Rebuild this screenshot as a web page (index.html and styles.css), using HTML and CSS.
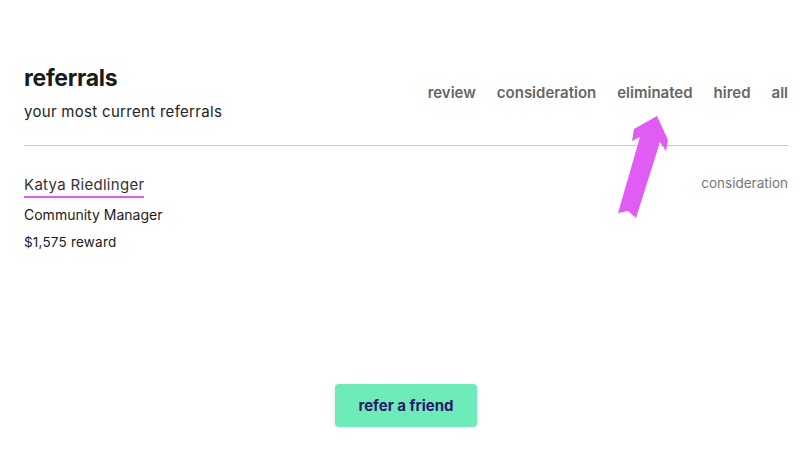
FILE: index.html
```html
<!DOCTYPE html>
<html lang="en">

<head>
    <meta charset="UTF-8">
    <meta name="viewport" content="width=device-width, initial-scale=1.0">
    <title>Referrals</title>
    <link rel="stylesheet" href="styles.css">
</head>

<body>
    <div class="page">
        <div class="header">
            <div class="heading">
                <h1>referrals</h1>
                <p>your most current referrals</p>
            </div>
            <nav class="tabs">
                <a href="#">review</a>
                <a href="#">consideration</a>
                <a href="#">eliminated</a>
                <a href="#">hired</a>
                <a href="#">all</a>
            </nav>
        </div>

        <div class="referral">
            <div class="details">
                <a href="#" class="name">Katya Riedlinger</a>
                <div class="role">Community Manager</div>
                <div class="reward">$1,575 reward</div>
            </div>
            <div class="status">consideration</div>
        </div>

        <div class="actions">
            <button class="refer-btn">refer a friend</button>
        </div>
    </div>

    <!-- pointer annotation -->
    <svg class="pointer" width="810" height="450" viewBox="0 0 810 450">
        <polygon fill="#e05cf5"
            points="657,116 668,140 666,151 660,142 636,218 628,211 618,213 640,137 632,141 634,129" />
    </svg>
</body>

</html>
```

FILE: styles.css
```css
body {
    margin: 0;
    font-family: Inter, 'Noto Sans', sans-serif;
    color: #1a1a1a;
    background: #fff;
}

.page {
    padding: 64px 22px 0 24px;
}

.header {
    display: flex;
    justify-content: space-between;
    align-items: flex-end;
    padding-bottom: 24px;
    border-bottom: 1px solid #c8c8c8;
}

.heading h1 {
    font-size: 23px;
    font-weight: 700;
    margin: 0;
    letter-spacing: -0.3px;
}

.heading p {
    font-size: 15px;
    letter-spacing: 0.3px;
    margin: 10px 0 0;
    color: #222;
}

.tabs {
    display: flex;
    gap: 21px;
    padding-bottom: 19px;
}

.tabs a {
    color: #666;
    font-size: 15px;
    font-weight: 600;
    text-decoration: none;
}

.referral {
    display: flex;
    justify-content: space-between;
    align-items: flex-start;
    padding-top: 28px;
}

.name {
    display: inline-block;
    color: #333;
    font-size: 15px;
    letter-spacing: 0.3px;
    text-decoration: none;
    border-bottom: 2px solid #e05cf5;
    padding-bottom: 2px;
}

.role {
    font-size: 14px;
    margin-top: 8px;
}

.reward {
    font-size: 13.5px;
    letter-spacing: 0.2px;
    margin-top: 11px;
}

.status {
    font-size: 13.5px;
    color: #777;
    padding-top: 1px;
}

.actions {
    display: flex;
    justify-content: center;
    padding-top: 134px;
}

.refer-btn {
    background: #6decb9;
    color: #2b1a6b;
    border: none;
    border-radius: 4px;
    font-family: inherit;
    font-size: 15px;
    font-weight: 700;
    padding: 12px 23px;
    box-shadow: 0 1px 4px rgba(0, 0, 0, 0.12);
    cursor: pointer;
}

.pointer {
    position: absolute;
    top: 0;
    left: 0;
    pointer-events: none;
}
```
